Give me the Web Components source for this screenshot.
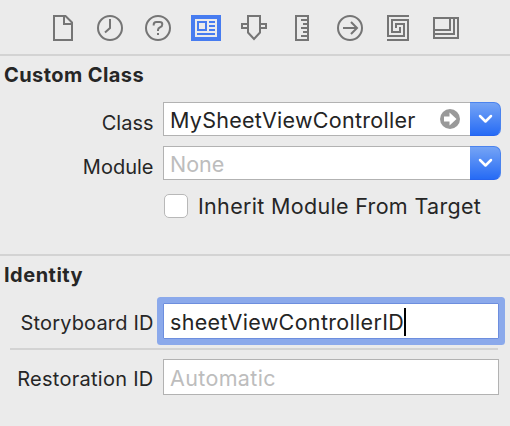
<!DOCTYPE html>
<html lang="en"><head><meta charset="utf-8"><title>Identity Inspector</title>
<style>html,body{margin:0;background:#ebebeb}body{width:510px;height:426px;overflow:hidden}</style></head>
<body>
<inspector-panel>
  <inspector-toolbar slot="toolbar"></inspector-toolbar>
  <inspector-section heading="Custom Class" style="--hls:.42px">
    <field-row label="Class" style="margin-top:16px"><combo-field value="MySheetViewController" jump style="--fls:.28px"></combo-field></field-row>
    <field-row label="Module" style="margin-top:10px"><combo-field placeholder="None"></combo-field></field-row>
    <check-box>Inherit Module From Target</check-box>
  </inspector-section>
  <inspector-section heading="Identity" style="margin-top:36px;--hls:.5px" ruled>
    <field-row label="Storyboard ID" style="margin-top:17px;--ls:.16px;--lt:8px"><text-field value="sheetViewControllerID" focused style="--fls:.32px"></text-field></field-row>
    <hair-line></hair-line>
    <field-row label="Restoration ID" style="margin-top:9px;--ls:.27px;--lt:8px"><text-field placeholder="Automatic" style="--fls:.35px"></text-field></field-row>
  </inspector-section>
</inspector-panel>
<script>
const define=(name,build)=>customElements.define(name,class extends HTMLElement{
  constructor(){super();this.attachShadow({mode:'open'})}
  connectedCallback(){this.shadowRoot.innerHTML=build(this)}
});
const text=el=>el.hasAttribute('value')?`<span class="t">${el.getAttribute('value')}</span>`:`<span class="t ph">${el.getAttribute('placeholder')}</span>`;
const fieldCss=`.t{font-size:21.5px;line-height:30px;letter-spacing:var(--fls,0);color:#242424;white-space:nowrap}.t.ph{color:#bdbdbd}.box .t{position:relative;top:1px}`;
define('inspector-panel',()=>`<style>:host{display:block;width:510px;height:426px;background:#ebebeb;color:#262626;font-family:Inter,"Liberation Sans",sans-serif}</style><slot name="toolbar"></slot><slot></slot>`);
const icons=[
 '<path d="M16 16H27.5L34 22.5V40H16ZM26 17V24H33"/>',
 '<circle cx="24" cy="28" r="12"/><path d="M24 19V28L19 32.5"/>',
 '<circle cx="24" cy="28" r="12"/><path d="M19.7 25.5V24.5Q19.7 22 22.3 22H25.7Q28.3 22 28.3 24.3Q28.3 26.3 26.3 27.2Q24 28.3 24 30V31M24 33V35"/>',
 '<g stroke="none"><path fill="#477cf0" d="M9 15H39V41H9Z"/><path fill="#ebebeb" d="M13 19H35V37H13Z"/></g><path stroke="#477cf0" d="M16 22H24V30H16ZM27 22H33M27 26H33M27 30H33M15 34H33"/>',
 '<path d="M18 16H30V32.5L24 39L18 32.5ZM18 24H12V28H18M30 24H36V28H30"/>',
 '<path d="M18 16H30V40H18ZM23 20H29M25 24H29M23 28H29M25 32H29M23 36H29"/>',
 '<circle cx="24" cy="28" r="12"/><path d="M17 28H30.5M25 22L31 28L25 34"/>',
 '<path d="M35 16H14V36H30V24H22V28M13 40H34V20H18V32H26V27"/>',
 '<path d="M12 18H36V38H12ZM12 34H32V18M12 30H28V18"/>'];
define('inspector-toolbar',()=>`<style>:host{display:flex;height:54px;padding-left:38px;border-bottom:2px solid #d3d3d3}svg{flex:none;width:48px;height:54px;fill:none;stroke:#757575;stroke-width:2}</style>${icons.map(i=>`<svg viewBox="0 0 48 54">${i}</svg>`).join('')}`);
define('inspector-section',el=>`<style>:host{display:block}:host([ruled]){border-top:2px solid #d3d3d3}h2{margin:0;padding:7px 0 0 4px;height:23px;font-size:20px;line-height:24px;font-weight:700;letter-spacing:var(--hls,0);white-space:nowrap}</style><h2>${el.getAttribute('heading')}</h2><slot></slot>`);
define('field-row',el=>`<style>:host{display:flex}label{width:153.5px;margin-right:9.5px;padding-top:var(--lt,9px);text-align:right;font-size:20px;line-height:24px;letter-spacing:var(--ls,0);white-space:nowrap}</style><label>${el.getAttribute('label')}</label><slot></slot>`);
define('combo-field',el=>`<style>:host{display:flex;width:338px;height:34px}${fieldCss}
.box{flex:1;display:flex;align-items:center;justify-content:space-between;box-sizing:border-box;background:#fff;border:1px solid #b2b2b2;border-right:0;padding:0 9px 0 6px}
.box svg{width:22px;height:22px}.cap{width:31px;height:34px;box-sizing:border-box;border:1px solid #4b83ee;border-left:0;border-bottom-color:#2563ee;border-radius:0 7px 7px 0;background:linear-gradient(#75a4f5,#266bf5)}.cap svg{display:block;width:30px;height:32px}</style>
<div class="box">${text(el)}${el.hasAttribute('jump')?'<svg viewBox="0 0 22 22"><circle cx="11" cy="11" r="10" fill="#999"/><path fill="#fff" d="M5 8.5H10.5V4.5L17.5 11L10.5 17.5V13.5H5Z"/></svg>':''}</div>
<div class="cap"><svg viewBox="0 0 30 32"><path d="M10 13L15.5 18.5L21 13" fill="none" stroke="#fff" stroke-width="2.5" stroke-linecap="round" stroke-linejoin="round"/></svg></div>`);
define('check-box',()=>`<style>:host{display:flex;align-items:center;margin:14px 0 0 164px;height:24px;font-size:21.5px}i{width:24px;height:24px;box-sizing:border-box;border:1px solid #b8b8b8;border-radius:5px;background:#fff;margin-right:10px}span{white-space:nowrap;letter-spacing:.32px}</style><i></i><span><slot></slot></span>`);
define('text-field',el=>`<style>:host{display:flex;align-items:center;box-sizing:border-box;width:336px;height:36px;padding-left:6px;background:#fff;border:1px solid #b2b2b2}:host([focused]){border-color:#6d8ede;box-shadow:0 0 0 6px #8ba9eb;border-radius:1px}${fieldCss}.t{margin-top:2px}b{width:2px;height:28px;background:#000;margin-top:2px}</style>${text(el)}${el.hasAttribute('focused')?'<b></b>':''}`);
define('hair-line',()=>`<style>:host{display:block;height:2px;margin:9px 12px 0 10px;background:#d3d3d3}</style>`);
</script></body></html>
